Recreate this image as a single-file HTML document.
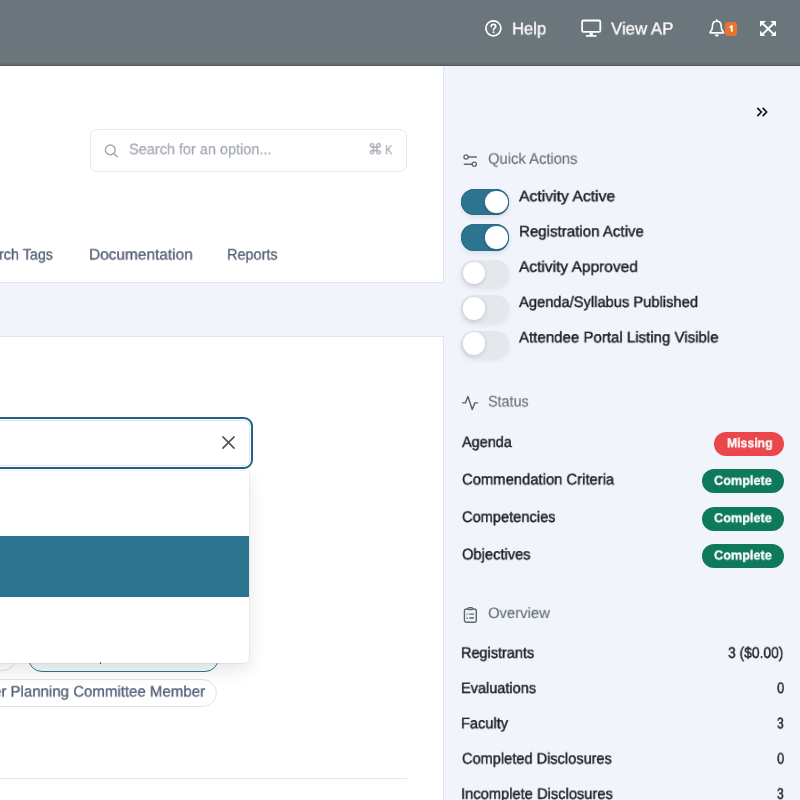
<!DOCTYPE html>
<html>
<head>
<meta charset="utf-8">
<title>Activity</title>
<style>
*{box-sizing:border-box;margin:0;padding:0}
html,body{width:800px;height:800px;overflow:hidden;background:#f1f4fa;font-family:"Liberation Sans",sans-serif;text-rendering:geometricPrecision}
body{position:relative}
.abs{position:absolute}
.t{position:absolute;white-space:nowrap;line-height:1;transform-origin:0 0;will-change:transform}
/* header */
#hdr{left:0;top:0;width:800px;height:65.800px;background:#6b767c;border-bottom:1.800px solid #535c62;box-shadow:inset 0 -1.500px 1px rgba(0,0,0,.1)}
.ht{color:#fff;-webkit-text-stroke:.3px #fff}
.ph{color:#a3a9b2;-webkit-text-stroke:.25px #a3a9b2}
.tab{color:#525b76;-webkit-text-stroke:.3px #525b76}
.sec{color:#65707b;-webkit-text-stroke:.15px #65707b}
.lbl{color:#1b1f24;-webkit-text-stroke:.45px #1b1f24}
.bt{color:#fff;font-weight:bold;-webkit-text-stroke:.3px #fff}
/* main */
#p1{left:-2px;top:60px;width:446px;height:222.700px;background:#fff;border:1px solid #e1e4e9}
#p2{left:-2px;top:335.600px;width:446px;height:480px;background:#fff;border:1px solid #e1e4e9}
#search{left:90px;top:129px;width:317px;height:43px;border:1px solid #e5e8ec;border-radius:7px;background:#fff}
/* dropdown */
#inp{left:-20px;top:416.600px;width:273.300px;height:52px;border:2.200px solid #1f6282;border-radius:9px;background:#fff}
#inp2{left:-20px;top:420px;width:270px;height:46px;border:1px solid #dde4ec;border-radius:6px}
#dd{left:-20px;top:470.500px;width:269.200px;height:192.200px;background:#fff;border-radius:0 0 5px 5px;box-shadow:0 7px 18px rgba(0,0,0,.1),0 0 0 1px rgba(0,0,0,.045)}
#sel{left:-20px;top:535.700px;width:269.100px;height:61.200px;background:#2d7491}
.pill{border:1px solid #dfe3e8;border-radius:14px;background:#fff}
/* sidebar */
.tog{width:48px;height:26.4px;border-radius:13.2px;left:461.200px;box-shadow:0 3px 5px rgba(60,80,110,.09)}
.tog.on{background:#2d7491;box-shadow:inset 0 0 0 1px #2a6e8b,0 3px 5px rgba(60,80,110,.09)}
.tog.off{background:#e4e8ed}
.tog i{position:absolute;top:1.9px;width:22.6px;height:22.6px;border-radius:11.3px;background:#fff;box-shadow:0 1px 4px rgba(0,0,0,.16)}
.tog.on i{left:24px}
.tog.off i{left:1.4px}
.bdg{height:24px;border-radius:12px}
.bdg.g{background:#0f7a5b;left:702.2px;width:82px}
.bdg.r{background:#e9474a;left:713.8px;width:70.4px}
</style>
</head>
<body>
<!-- main -->
<div class="abs" id="p1"></div>
<div class="abs" id="p2"></div>
<div class="abs" id="hdr"></div>

<!-- header icons -->
<svg class="abs" style="left:485px;top:20px" width="17" height="17" viewBox="0 0 17 17" fill="none" stroke="#fff" stroke-width="1.7"><circle cx="8.4" cy="8.3" r="7.5"/><path d="M6.200 6.500c0-1.300 1-2.100 2.200-2.100s2.300.8 2.300 2c0 1.600-2.200 1.700-2.200 3.300" stroke-linecap="round"/><circle cx="8.500" cy="12.300" r="1" fill="#fff" stroke="none"/></svg>
<svg class="abs" style="left:581px;top:19px" width="21" height="19" viewBox="0 0 21 19" fill="none" stroke="#fff"><rect x="1.100" y="1.500" width="18.200" height="11.400" rx="1.300" stroke-width="1.800"/><path d="M10.200 13.500v2.600" stroke-width="3.200"/><path d="M5.700 16.900h9" stroke-width="1.900" stroke-linecap="round"/></svg>
<svg class="abs" style="left:709px;top:19.300px" width="16" height="18" viewBox="0 0 16 18" fill="none" stroke="#fff" stroke-width="1.600" stroke-linejoin="round" stroke-linecap="round"><path d="M7.800 .9v1.300"/><path d="M7.800 2.300c-2.700 0-4.300 2-4.300 4.600 0 3.400-.9 4.800-2.400 6.400v.6h13.400v-.6c-1.500-1.600-2.400-3-2.400-6.400 0-2.600-1.600-4.600-4.300-4.600z"/><path d="M5.700 15.600a2.100 2.100 0 0 0 4.200 0z" fill="#fff" stroke="none"/></svg>
<div class="abs" style="left:725px;top:22px;width:12px;height:14.200px;border-radius:3px;background:#e8742e"></div>
<svg class="abs" style="left:725px;top:22px" width="12" height="14" viewBox="0 0 12 14"><path d="M4.100 4.900l2.100-1.700h1.500v6.500h-1.800v-4.400l-1.300.9z" fill="#fff"/></svg>
<svg class="abs" style="left:760.200px;top:20.600px" width="16.300" height="15.600" viewBox="0 0 17 17" preserveAspectRatio="none" fill="#fff" stroke="#fff" stroke-width="2"><path d="M3 3l11 11M14 3l-11 11" fill="none"/><path d="M0 0h6.300L0 6.300zM17 0h-6.300L17 6.300zM0 17h6.300L0 10.700zM17 17h-6.300L17 10.700z" stroke="none"/></svg>

<!-- search -->
<div class="abs" id="search"></div>
<svg class="abs" style="left:104px;top:143px" width="15" height="15" viewBox="0 0 15 15" fill="none" stroke="#9fa5ad" stroke-width="1.400" stroke-linecap="round"><circle cx="6.300" cy="6.900" r="4.900"/><path d="M9.900 10.500l3.400 3.300"/></svg>

<!-- pills behind dropdown -->
<div class="abs pill" style="left:-30px;top:643px;width:47px;height:28px"></div>
<div class="abs pill" style="left:28px;top:643px;width:190.500px;height:29px;border:1.500px solid #2d7491;background:#f4f8fa"></div>
<div class="abs pill" style="left:-60px;top:679px;width:277px;height:28px"></div>
<div class="abs" style="left:0;top:778.100px;width:407px;height:1px;background:#e4e7ea"></div>

<!-- input & dropdown -->
<div class="abs" id="dd"></div>
<div class="abs" id="sel"></div>
<div class="abs" style="left:99.800px;top:661.600px;width:1.700px;height:2.600px;background:#3a3f47;border-radius:.5px"></div>
<div class="abs" id="inp"></div>
<div class="abs" id="inp2"></div>
<svg class="abs" style="left:221px;top:435px" width="15" height="15" viewBox="0 0 15 15" fill="none" stroke="#4a4f57" stroke-width="1.500" stroke-linecap="round"><path d="M1.900 1.900l11.200 11.200M13.100 1.900l-11.200 11.200"/></svg>

<!-- sidebar -->
<svg class="abs" style="left:756px;top:107.100px" width="12" height="11" viewBox="0 0 12 11" fill="none" stroke="#0e1013" stroke-width="1.700" stroke-linecap="round" stroke-linejoin="round"><path d="M1.800 1.400l3.600 3.600-3.600 3.600M7.100 1.400l3.600 3.600-3.600 3.600"/></svg>

<svg class="abs" style="left:463px;top:154px" width="15" height="14" viewBox="0 0 15 14" fill="none" stroke="#5d6772" stroke-width="1.350" stroke-linecap="round"><circle cx="3.050" cy="2.950" r="2.100"/><path d="M5.500 2.950H13.400"/><circle cx="11.250" cy="10.250" r="2.100"/><path d="M1.300 10.250h7.500"/></svg>

<div class="abs tog on" style="top:189px"><i></i></div>
<div class="abs tog on" style="top:224.400px"><i></i></div>
<div class="abs tog off" style="top:259.900px"><i></i></div>
<div class="abs tog off" style="top:295.200px"><i></i></div>
<div class="abs tog off" style="top:330.500px"><i></i></div>

<svg class="abs" style="left:462px;top:395px" width="17" height="16" viewBox="0 0 17 16" fill="none" stroke="#55606b" stroke-width="1.400" stroke-linecap="round" stroke-linejoin="round"><path d="M.5 7.900H3.400L5.900 1.500l4.350 13L12.800 7.900h2.800"/></svg>
<div class="abs bdg r" style="top:431.600px"></div>
<div class="abs bdg g" style="top:469.100px"></div>
<div class="abs bdg g" style="top:506.600px"></div>
<div class="abs bdg g" style="top:543.900px"></div>

<svg class="abs" style="left:463px;top:606px" width="15" height="18" viewBox="0 0 15 18" fill="none" stroke="#5d6772" stroke-width="1.400" stroke-linecap="round" stroke-linejoin="round"><rect x="1.450" y="2.950" width="11.850" height="13.350" rx="2"/><rect x="4.900" y="1.700" width="4.700" height="1.900" rx=".9" fill="#f1f4fa"/><path d="M4.100 8.100h.3M6.700 8.100h3.800M4.100 12h.3M6.700 12h3.800" stroke-width="1.300"/></svg>

<div class="t ht" id="help" style="left:511.55px;top:19px;font-size:18.792px;transform:translateY(1.50px) scale(0.8826,0.9259)">Help</div>
<div class="t ht" id="viewap" style="left:611.00px;top:19px;font-size:18.792px;transform:translateY(1.50px) scale(0.8972,0.9259)">View AP</div>
<div class="t ph" id="stext" style="left:129.00px;top:141px;font-size:16.524px;transform:translateY(1.20px) scale(0.8765,0.9259)">Search for an option...</div>
<div class="t ph" id="cmd" style="left:368.03px;top:141px;font-size:16.200px;transform:translateY(1.40px) scale(0.8974,0.9259)">⌘</div>
<div class="t ph" id="kk" style="left:384.75px;top:143px;font-size:14.040px;transform:translateY(0.08px) scale(0.7870,0.9259)">K</div>
<div class="t tab" id="tab1" style="left:-1.04px;top:246px;font-size:16.524px;transform:translateY(1.50px) scale(0.8698,0.9259)">rch Tags</div>
<div class="t tab" id="tab2" style="left:88.89px;top:246px;font-size:16.524px;transform:translateY(1.50px) scale(0.9334,0.9259)">Documentation</div>
<div class="t tab" id="tab3" style="left:227.35px;top:246px;font-size:16.524px;transform:translateY(1.50px) scale(0.8767,0.9259)">Reports</div>
<div class="t tab" id="pilltext" style="left:-7.02px;top:683px;font-size:16.524px;transform:translateY(1.50px) scale(0.9095,0.9259)">er Planning Committee Member</div>
<div class="t sec" id="qa" style="left:488.25px;top:150px;font-size:16.524px;transform:translateY(1.70px) scale(0.8942,0.9259)">Quick Actions</div>
<div class="t lbl" id="l1" style="left:519.10px;top:188px;font-size:16.524px;transform:translateY(1.20px) scale(0.9531,0.9259)">Activity Active</div>
<div class="t lbl" id="l2" style="left:518.61px;top:223px;font-size:16.524px;transform:translateY(1.40px) scale(0.9133,0.9259)">Registration Active</div>
<div class="t lbl" id="l3" style="left:519.10px;top:258px;font-size:16.524px;transform:translateY(1.70px) scale(0.9388,0.9259)">Activity Approved</div>
<div class="t lbl" id="l4" style="left:519.10px;top:294px;font-size:16.524px;transform:translateY(1.00px) scale(0.8898,0.9259)">Agenda/Syllabus Published</div>
<div class="t lbl" id="l5" style="left:519.10px;top:329px;font-size:16.524px;transform:translateY(1.30px) scale(0.9106,0.9259)">Attendee Portal Listing Visible</div>
<div class="t sec" id="st" style="left:488.25px;top:393px;font-size:16.524px;transform:translateY(1.40px) scale(0.8684,0.9259)">Status</div>
<div class="t lbl" id="s1" style="left:461.70px;top:434px;font-size:16.524px;transform:translateY(1.00px) scale(0.8749,0.9259)">Agenda</div>
<div class="t lbl" id="s2" style="left:461.60px;top:471px;font-size:16.524px;transform:translateY(1.40px) scale(0.8962,0.9259)">Commendation Criteria</div>
<div class="t lbl" id="s3" style="left:461.60px;top:508px;font-size:16.524px;transform:translateY(1.90px) scale(0.8860,0.9259)">Competencies</div>
<div class="t lbl" id="s4" style="left:461.60px;top:546px;font-size:16.524px;transform:translateY(1.30px) scale(0.8890,0.9259)">Objectives</div>
<div class="t sec" id="ov" style="left:487.80px;top:605px;font-size:16.524px;transform:translateY(1.00px) scale(0.8987,0.9259)">Overview</div>
<div class="t lbl" id="o1" style="left:460.95px;top:644px;font-size:16.524px;transform:translateY(1.80px) scale(0.8762,0.9259)">Registrants</div>
<div class="t lbl" id="o2" style="left:460.95px;top:680px;font-size:16.524px;transform:translateY(1.05px) scale(0.8783,0.9259)">Evaluations</div>
<div class="t lbl" id="o3" style="left:460.95px;top:715px;font-size:16.524px;transform:translateY(1.30px) scale(0.8830,0.9259)">Faculty</div>
<div class="t lbl" id="o4" style="left:461.60px;top:750px;font-size:16.524px;transform:translateY(1.55px) scale(0.8829,0.9259)">Completed Disclosures</div>
<div class="t lbl" id="o5" style="left:460.94px;top:785px;font-size:16.524px;transform:translateY(1.80px) scale(0.8896,0.9259)">Incomplete Disclosures</div>
<div class="t lbl" id="v1" style="left:728.20px;top:644px;font-size:16.524px;transform:translateY(1.80px) scale(0.8376,0.9259)">3 ($0.00)</div>
<div class="t lbl" id="v2" style="left:776.70px;top:680px;font-size:16.524px;transform:translateY(1.05px) scale(0.7870,0.9259)">0</div>
<div class="t lbl" id="v3" style="left:777.30px;top:715px;font-size:16.524px;transform:translateY(1.30px) scale(0.7176,0.9259)">3</div>
<div class="t lbl" id="v4" style="left:776.70px;top:750px;font-size:16.524px;transform:translateY(1.55px) scale(0.7870,0.9259)">0</div>
<div class="t lbl" id="v5" style="left:777.30px;top:785px;font-size:16.524px;transform:translateY(1.80px) scale(0.7176,0.9259)">3</div>
<div class="t bt" id="b1" style="left:726.50px;top:436px;font-size:14.040px;transform:translateY(0.18px) scale(0.8714,0.9259)">Missing</div>
<div class="t bt" id="b2" style="left:714.40px;top:473px;font-size:14.040px;transform:translateY(0.68px) scale(0.9024,0.9259)">Complete</div>
<div class="t bt" id="b3" style="left:714.40px;top:511px;font-size:14.040px;transform:translateY(0.08px) scale(0.9024,0.9259)">Complete</div>
<div class="t bt" id="b4" style="left:714.40px;top:548px;font-size:14.040px;transform:translateY(0.38px) scale(0.9024,0.9259)">Complete</div>
</body>
</html>
